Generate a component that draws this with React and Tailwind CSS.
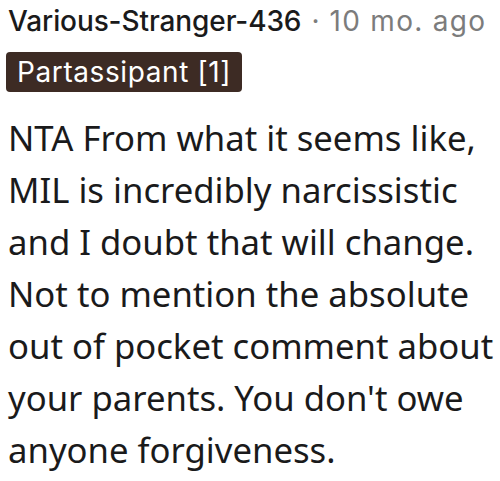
export default function App() {
  return (
    <div className="w-[500px] h-[481px] bg-white overflow-hidden pl-[8px] pt-[2px]">
      <div className="flex items-baseline gap-[10px] text-[28px] leading-[38px] whitespace-nowrap" style={{ fontFamily: "Inter, 'Noto Sans', sans-serif" }}>
        <span className="font-medium text-[#1a1a1b] tracking-[-0.1px]">Various-Stranger-436</span>
        <span className="text-[#7c7c7c]">·</span>
        <span className="text-[#7c7c7c] tracking-[1.3px]">10 mo. ago</span>
      </div>
      <div className="mt-[12px] -ml-[2px] inline-flex rounded-[4px] bg-[#3d2b24] px-[11px] h-[40px] items-center text-[28px] text-white tracking-[0.6px]" style={{ fontFamily: "Inter, 'Noto Sans', sans-serif" }}>
        Partassipant [1]
      </div>
      <p className="mt-[20px] w-[492px] text-[34.7px] leading-[52px] text-[#1a1a1b]" style={{ fontFamily: "'Noto Sans', sans-serif" }}>
        NTA From what it seems like, MIL is incredibly narcissistic and I doubt that will change. Not to mention the absolute out of pocket comment about your parents. You don't owe anyone forgiveness.
      </p>
    </div>
  );
}
